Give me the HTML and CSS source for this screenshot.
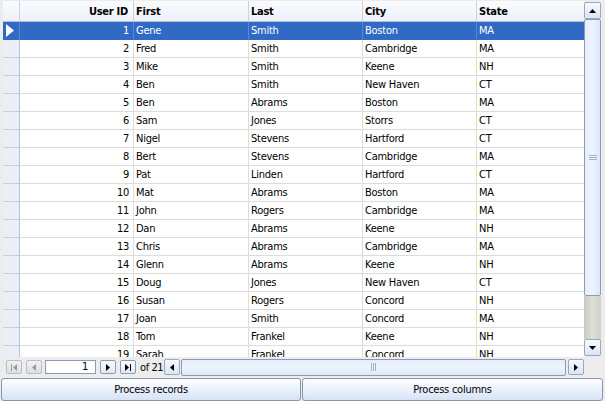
FILE: index.html
```html
<!DOCTYPE html>
<html>
<head>
<meta charset="utf-8">
<link rel="stylesheet" href="styles.css">
</head>
<body>
<div class="app">
  <div class="frame">
    <div class="gridrow">
      <div class="viewport">
        <div class="row head">
          <div class="rh"></div>
          <div class="c num">User ID</div>
          <div class="c">First</div>
          <div class="c">Last</div>
          <div class="c">City</div>
          <div class="c">State</div>
        </div>
        <div class="row sel">
          <div class="rh"><svg width="8" height="13" viewBox="0 0 8 13"><polygon points="0,0 8,6.5 0,13" fill="#fff"/></svg></div>
          <div class="c num">1</div><div class="c">Gene</div><div class="c">Smith</div><div class="c">Boston</div><div class="c">MA</div>
        </div>
        <div class="row"><div class="rh"></div><div class="c num">2</div><div class="c">Fred</div><div class="c">Smith</div><div class="c">Cambridge</div><div class="c">MA</div></div>
        <div class="row"><div class="rh"></div><div class="c num">3</div><div class="c">Mike</div><div class="c">Smith</div><div class="c">Keene</div><div class="c">NH</div></div>
        <div class="row"><div class="rh"></div><div class="c num">4</div><div class="c">Ben</div><div class="c">Smith</div><div class="c">New Haven</div><div class="c">CT</div></div>
        <div class="row"><div class="rh"></div><div class="c num">5</div><div class="c">Ben</div><div class="c">Abrams</div><div class="c">Boston</div><div class="c">MA</div></div>
        <div class="row"><div class="rh"></div><div class="c num">6</div><div class="c">Sam</div><div class="c">Jones</div><div class="c">Storrs</div><div class="c">CT</div></div>
        <div class="row"><div class="rh"></div><div class="c num">7</div><div class="c">Nigel</div><div class="c">Stevens</div><div class="c">Hartford</div><div class="c">CT</div></div>
        <div class="row"><div class="rh"></div><div class="c num">8</div><div class="c">Bert</div><div class="c">Stevens</div><div class="c">Cambridge</div><div class="c">MA</div></div>
        <div class="row"><div class="rh"></div><div class="c num">9</div><div class="c">Pat</div><div class="c">Linden</div><div class="c">Hartford</div><div class="c">CT</div></div>
        <div class="row"><div class="rh"></div><div class="c num">10</div><div class="c">Mat</div><div class="c">Abrams</div><div class="c">Boston</div><div class="c">MA</div></div>
        <div class="row"><div class="rh"></div><div class="c num">11</div><div class="c">John</div><div class="c">Rogers</div><div class="c">Cambridge</div><div class="c">MA</div></div>
        <div class="row"><div class="rh"></div><div class="c num">12</div><div class="c">Dan</div><div class="c">Abrams</div><div class="c">Keene</div><div class="c">NH</div></div>
        <div class="row"><div class="rh"></div><div class="c num">13</div><div class="c">Chris</div><div class="c">Abrams</div><div class="c">Cambridge</div><div class="c">MA</div></div>
        <div class="row"><div class="rh"></div><div class="c num">14</div><div class="c">Glenn</div><div class="c">Abrams</div><div class="c">Keene</div><div class="c">NH</div></div>
        <div class="row"><div class="rh"></div><div class="c num">15</div><div class="c">Doug</div><div class="c">Jones</div><div class="c">New Haven</div><div class="c">CT</div></div>
        <div class="row"><div class="rh"></div><div class="c num">16</div><div class="c">Susan</div><div class="c">Rogers</div><div class="c">Concord</div><div class="c">NH</div></div>
        <div class="row"><div class="rh"></div><div class="c num">17</div><div class="c">Joan</div><div class="c">Smith</div><div class="c">Concord</div><div class="c">MA</div></div>
        <div class="row"><div class="rh"></div><div class="c num">18</div><div class="c">Tom</div><div class="c">Frankel</div><div class="c">Keene</div><div class="c">NH</div></div>
        <div class="row"><div class="rh"></div><div class="c num">19</div><div class="c">Sarah</div><div class="c">Frankel</div><div class="c">Concord</div><div class="c">NH</div></div>
      </div>
      <div class="vscroll">
        <div class="sbtn"><svg width="7" height="4" viewBox="0 0 7 4"><polygon points="3.5,0 7,4 0,4" fill="#000"/></svg></div>
        <div class="vthumb"><span class="hgrip"></span></div>
        <div class="vtrack"></div>
        <div class="sbtn"><svg width="7" height="4" viewBox="0 0 7 4"><polygon points="0,0 7,0 3.5,4" fill="#000"/></svg></div>
      </div>
    </div>
    <div class="navrow">
      <div class="nav">
        <div class="nbtn dis"><svg width="6" height="7" viewBox="0 0 6 7"><rect x="0" y="0" width="1" height="7" fill="#9a9a9a"/><polygon points="6,0 6,7 2,3.5" fill="#9a9a9a"/></svg></div>
        <div class="nbtn dis"><svg width="4" height="7" viewBox="0 0 4 7"><polygon points="4,0 4,7 0,3.5" fill="#9a9a9a"/></svg></div>
        <div class="pos">1</div>
        <div class="nbtn"><svg width="4" height="7" viewBox="0 0 4 7"><polygon points="0,0 0,7 4,3.5" fill="#000"/></svg></div>
        <div class="nbtn"><svg width="6" height="7" viewBox="0 0 6 7"><polygon points="0,0 0,7 4,3.5" fill="#000"/><rect x="5" y="0" width="1" height="7" fill="#000"/></svg></div>
        <span class="of">of 21</span>
      </div>
      <div class="hscroll">
        <div class="sbtn h"><svg width="4" height="7" viewBox="0 0 4 7"><polygon points="4,0 4,7 0,3.5" fill="#000"/></svg></div>
        <div class="hthumb"><span class="vgrip"></span></div>
        <div class="sbtn h"><svg width="4" height="7" viewBox="0 0 4 7"><polygon points="0,0 0,7 4,3.5" fill="#000"/></svg></div>
      </div>
    </div>
  </div>
  <div class="buttons">
    <button class="btn b1">Process records</button>
    <button class="btn b2">Process columns</button>
  </div>
</div>
</body>
</html>
```
FILE: styles.css
```css
* { box-sizing: border-box; }
html, body { margin: 0; padding: 0; }
body {
  font-family: Tahoma, "DejaVu Sans Condensed", "DejaVu Sans", sans-serif;
  font-size: 11px;
  letter-spacing: -0.25px;
  color: #000;
  background: #ececec;
}
.app {
  width: 605px;
  height: 401px;
  background: #ececec;
  display: flex;
  flex-direction: column;
  overflow: hidden;
}
.frame {
  margin: 1px 0 0 3px;
  width: 598px;
  display: flex;
  flex-direction: column;
}
.gridrow {
  height: 356px;
  display: flex;
}
.viewport {
  width: 581px;
  height: 356px;
  overflow: hidden;
  background: #fff;
}
.row {
  display: grid;
  grid-template-columns: 17px 114px 115px 114px 114px 114px;
  width: 588px;
  height: 18px;
}
.row .c {
  border-right: 1px solid #dcdcdc;
  border-bottom: 1px solid #dcdcdc;
  padding: 0 0 0 2px;
  line-height: 18px;
  white-space: nowrap;
  overflow: hidden;
}
.row .c.num {
  text-align: right;
  padding: 0 4px 0 0;
}
.rh {
  background: #eaeef6;
  border-right: 1px solid #b9c3d6;
  border-bottom: 1px solid #c8d0df;
  display: flex;
  align-items: center;
  padding-left: 3px;
}
.row.head {
  height: 21px;
}
.row.head .c, .row.head .rh {
  background: linear-gradient(#f9fbfe, #eef2f9);
  border-right: 1px solid #c9d2e0;
  border-bottom: 1px solid #b6c0d2;
  font-weight: bold;
  line-height: 21px;
}
.row.head .c.num { padding-right: 5px; }
.row.sel .c, .row.sel .rh {
  background: #316ac5;
  color: #fff;
  border-bottom-color: #316ac5;
}
.row.sel .c { border-right-color: #5c86d2; }
.row.sel .rh { border-right-color: #5c86d2; }

.vscroll {
  width: 17px;
  height: 356px;
  display: flex;
  flex-direction: column;
  padding: 1px 0;
  background: #ececec;
}
.sbtn {
  height: 17px;
  flex: none;
  border: 1px solid #9aa7bd;
  border-radius: 2px;
  background: linear-gradient(#f6f9fe, #dbe5f5);
  display: flex;
  align-items: center;
  justify-content: center;
}
.vthumb {
  height: 277px;
  flex: none;
  border: 1px solid #8e9ab0;
  border-radius: 2px;
  background: linear-gradient(90deg, #e4eefc, #eef4fe 50%, #dbe7fa);
  display: flex;
  align-items: center;
  justify-content: center;
}
.hgrip {
  width: 8px;
  height: 5px;
  border-top: 1px solid #a6b2c8;
  border-bottom: 1px solid #a6b2c8;
  position: relative;
}
.hgrip::after {
  content: "";
  position: absolute;
  left: 0; right: 0; top: 1px;
  border-top: 1px solid #a6b2c8;
}
.vtrack {
  flex: 1;
  background: linear-gradient(90deg, #c9c9c0, #deded6 50%, #cfcfc6);
}

.navrow {
  height: 20px;
  display: flex;
  align-items: center;
}
.nav {
  width: 161px;
  flex: none;
  display: flex;
  align-items: center;
  padding-left: 3px;
  overflow: visible;
}
.nbtn {
  width: 16px;
  height: 14px;
  flex: none;
  border: 1px solid #8b9ab3;
  border-radius: 2px;
  background: linear-gradient(#fafcff, #dfe7f4);
  display: flex;
  align-items: center;
  justify-content: center;
  margin-right: 4px;
}
.nbtn.dis {
  border-color: #b8bec8;
  background: linear-gradient(#f2f2f2, #dedede);
}
.pos {
  width: 51px;
  height: 14px;
  flex: none;
  border: 1px solid #8a9bb5;
  background: #fff;
  text-align: right;
  padding-right: 7px;
  line-height: 12px;
  margin-right: 4px;
}
.nbtn + .nbtn { margin-right: 3px; }
.of { margin-left: 1px; white-space: nowrap; letter-spacing: -0.4px; }
.hscroll {
  width: 420px;
  flex: none;
  height: 17px;
  display: flex;
  gap: 1px;
  align-items: center;
}
.sbtn.h {
  width: 16px;
  height: 16px;
}
.hthumb {
  flex: 1;
  height: 17px;
  border: 1px solid #8e9ab0;
  border-radius: 2px;
  background: linear-gradient(#e4eefc, #eef4fe 50%, #dbe7fa);
  display: flex;
  align-items: center;
  justify-content: center;
  margin-right: 1px;
}
.vgrip {
  width: 5px;
  height: 8px;
  border-left: 1px solid #a6b2c8;
  border-right: 1px solid #a6b2c8;
  position: relative;
}
.vgrip::after {
  content: "";
  position: absolute;
  top: 0; bottom: 0; left: 1px;
  border-left: 1px solid #a6b2c8;
}
.buttons {
  margin-top: 1px;
  display: flex;
  gap: 1px;
  padding-left: 1px;
  height: 23px;
}
.btn {
  font: inherit;
  letter-spacing: inherit;
  color: #000;
  height: 23px;
  border: 1px solid #8c96a4;
  border-radius: 3px;
  background: linear-gradient(#fcfdff, #e6eefb 60%, #d6e2f6);
  padding: 0;
  margin: 0;
}
.b1 { width: 300px; }
.b2 { width: 301px; }
```
